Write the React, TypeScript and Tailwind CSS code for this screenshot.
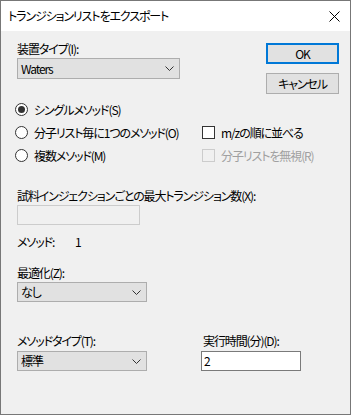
import React from 'react';

const font = "font-['Noto_Sans_CJK_JP','Noto_Sans',sans-serif] [font-feature-settings:'palt'] tracking-[-1.1px]";

const Chevron: React.FC = () => (
    <svg width="9" height="5" viewBox="0 0 9 5" className="shrink-0">
        <path d="M0.5 0.5 L4.5 4.5 L8.5 0.5" fill="none" stroke="#333" strokeWidth="1" />
    </svg>
);

const Select: React.FC<{ value: string; w: string; h: string }> = ({ value, w, h }) => (
    <div className={`${w} ${h} flex items-center justify-between border border-[#adadad] bg-[#e1e1e1] pl-[3px] pr-[5px]`}>
        <span className="leading-none">{value}</span>
        <Chevron />
    </div>
);

const Radio: React.FC<{ checked?: boolean; label: string }> = ({ checked, label }) => (
    <div className="flex h-[23px] items-center gap-[6px]">
        <div className="flex h-[13px] w-[13px] items-center justify-center rounded-full border border-[#333] bg-white">
            {checked && <div className="h-[7px] w-[7px] rounded-full bg-[#333]" />}
        </div>
        <span className="leading-none">{label}</span>
    </div>
);

const Check: React.FC<{ disabled?: boolean; label: string }> = ({ disabled, label }) => (
    <div className="flex h-[23px] items-center gap-[6px]">
        <div className={`h-[13px] w-[13px] border ${disabled ? 'border-[#cccccc] bg-[#f0f0f0]' : 'border-[#333] bg-white'}`} />
        <span className={`leading-none ${disabled ? 'text-[#a0a0a0]' : ''}`}>{label}</span>
    </div>
);

const App: React.FC = () => {
    return (
        <div className={`${font} flex h-[415px] w-[351px] flex-col border border-[#777] text-[12px] text-black`}>
            {/* title bar */}
            <div className="flex h-[30px] shrink-0 items-center justify-between bg-white pl-[7px] pr-[10px]">
                <span className="leading-none">トランジションリストをエクスポート</span>
                <svg width="11" height="11" viewBox="0 0 11 11">
                    <path d="M0.5 0.5 L10.5 10.5 M10.5 0.5 L0.5 10.5" stroke="#000" strokeWidth="1" />
                </svg>
            </div>

            <div className="flex flex-1 flex-col bg-[#f0f0f0] pl-[16px] pr-[11px]">
                {/* top row */}
                <div className="flex justify-between">
                    <div className="mt-[10px] flex flex-col">
                        <div className="flex h-4 items-center">装置タイプ(I):</div>
                        <div className="mt-[1px]">
                            <Select value="Waters" w="w-[163px]" h="h-[21px]" />
                        </div>
                    </div>
                    <div className="mt-[12px] flex flex-col gap-[9px]">
                        <button className="flex h-[21px] w-[73px] items-center justify-center border-2 border-[#0078d7] bg-[#e1e1e1] leading-none">
                            OK
                        </button>
                        <button className="flex h-[21px] w-[73px] items-center justify-center border border-[#adadad] bg-[#e1e1e1] leading-none">
                            キャンセル
                        </button>
                    </div>
                </div>

                {/* options */}
                <div className="-ml-[2px] mt-[4px] grid grid-cols-[187px_1fr]">
                    <div className="flex flex-col">
                        <Radio checked label="シングルメソッド(S)" />
                        <Radio label="分子リスト毎に1つのメソッド(O)" />
                        <Radio label="複数メソッド(M)" />
                    </div>
                    <div className="flex flex-col pt-[23px]">
                        <Check label="m/zの順に並べる" />
                        <Check disabled label="分子リストを無視(R)" />
                    </div>
                </div>

                <div className="mt-[21px] flex h-4 items-center">試料インジェクションごとの最大トランジション数(X):</div>
                <div className="mt-[1px] h-[20px] w-[123px] border border-[#cccccc] bg-[#f0f0f0]" />

                <div className="mt-[9px] flex h-4 items-center">
                    <span className="w-[58px]">メソッド:</span>
                    <span>1</span>
                </div>

                <div className="mt-[15px] flex h-4 items-center">最適化(Z):</div>
                <div className="mt-[1px]">
                    <Select value="なし" w="w-[130px]" h="h-[20px]" />
                </div>

                <div className="mt-[31px] grid grid-cols-[184px_1fr]">
                    <div className="flex flex-col">
                        <div className="flex h-4 items-center">メソッドタイプ(T):</div>
                        <div className="mt-[2px]">
                            <Select value="標準" w="w-[130px]" h="h-[20px]" />
                        </div>
                    </div>
                    <div className="flex flex-col">
                        <div className="ml-[2px] flex h-4 items-center">実行時間(分)(D):</div>
                        <div className="mt-[2px] flex h-[20px] w-[100px] items-center border border-[#7a7a7a] bg-white pl-[2px] leading-none">
                            2
                        </div>
                    </div>
                </div>
            </div>
        </div>
    );
};

export default App;
